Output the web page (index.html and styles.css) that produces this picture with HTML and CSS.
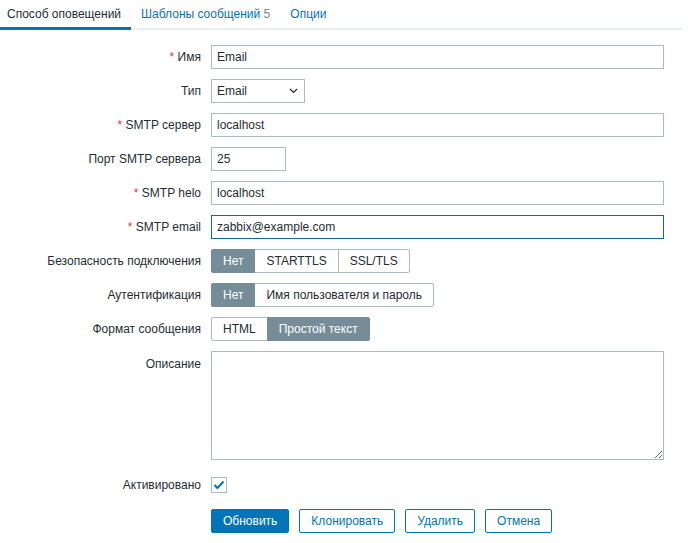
FILE: index.html
```html
<!DOCTYPE html>
<html lang="ru">
<head>
<meta charset="utf-8">
<title>Способ оповещений</title>
<link rel="stylesheet" href="styles.css">
</head>
<body>
<div class="tabs">
  <a class="tab tab-active">Способ оповещений</a>
  <a class="tab">Шаблоны сообщений <span class="count">5</span></a>
  <a class="tab">Опции</a>
</div>
<form class="form">
  <label class="lbl"><span class="req">*</span> Имя</label>
  <div class="field"><input class="input input-wide" type="text" value="Email"></div>

  <label class="lbl">Тип</label>
  <div class="field">
    <div class="select">
      <span>Email</span>
      <svg width="9" height="6" viewBox="0 0 9 6"><path d="M1 1l3.5 3.5L8 1" fill="none" stroke="#1f2c33" stroke-width="1.2"/></svg>
    </div>
  </div>

  <label class="lbl"><span class="req">*</span> SMTP сервер</label>
  <div class="field"><input class="input input-wide" type="text" value="localhost"></div>

  <label class="lbl">Порт SMTP сервера</label>
  <div class="field"><input class="input input-port" type="text" value="25"></div>

  <label class="lbl"><span class="req">*</span> SMTP helo</label>
  <div class="field"><input class="input input-wide" type="text" value="localhost"></div>

  <label class="lbl"><span class="req">*</span> SMTP email</label>
  <div class="field"><input class="input input-wide input-focus" type="text" value="zabbix@example.com"></div>

  <label class="lbl">Безопасность подключения</label>
  <div class="field">
    <div class="seg">
      <span class="seg-btn seg-on">Нет</span><span class="seg-btn">STARTTLS</span><span class="seg-btn">SSL/TLS</span>
    </div>
  </div>

  <label class="lbl">Аутентификация</label>
  <div class="field">
    <div class="seg">
      <span class="seg-btn seg-on">Нет</span><span class="seg-btn">Имя пользователя и пароль</span>
    </div>
  </div>

  <label class="lbl">Формат сообщения</label>
  <div class="field">
    <div class="seg">
      <span class="seg-btn">HTML</span><span class="seg-btn seg-on">Простой текст</span>
    </div>
  </div>

  <label class="lbl lbl-top">Описание</label>
  <div class="field"><textarea class="textarea"></textarea></div>

  <label class="lbl lbl-check">Активировано</label>
  <div class="field field-check">
    <span class="checkbox">
      <svg width="12" height="10" viewBox="0 0 12 10"><path d="M1.5 5l3 3 6-6.5" fill="none" stroke="#0275b8" stroke-width="2"/></svg>
    </span>
  </div>

  <div></div>
  <div class="actions">
    <button type="button" class="btn btn-primary">Обновить</button>
    <button type="button" class="btn">Клонировать</button>
    <button type="button" class="btn">Удалить</button>
    <button type="button" class="btn">Отмена</button>
  </div>
</form>
</body>
</html>
```
FILE: styles.css
```css
* { box-sizing: border-box; }
html, body {
  margin: 0;
  padding: 0;
  background: #fff;
  font-family: "Liberation Sans", Arial, sans-serif;
  font-size: 12px;
  color: #1f2c33;
}
.tabs {
  display: flex;
  height: 30px;
  border-bottom: 2px solid #ebeef0;
  margin-right: 6px;
}
.tab {
  display: block;
  padding: 0 10px;
  line-height: 28px;
  height: 30px;
  color: #0275b8;
  text-decoration: none;
  white-space: nowrap;
}
.tab-active {
  color: #1f2c33;
  padding-left: 7px;
  padding-right: 10px;
  border-bottom: 3px solid #0275b8;
  line-height: 28px;
  margin-bottom: -2px;
}
.count { color: #768d99; }

.form {
  display: grid;
  grid-template-columns: 201px 453px;
  column-gap: 10px;
  row-gap: 10px;
  padding-top: 15px;
}
.lbl {
  text-align: right;
  line-height: 24px;
  height: 24px;
  white-space: nowrap;
}
.lbl-top { align-self: start; margin-top: 1px; }
.req { color: #e33734; }
.field { display: flex; align-items: center; min-height: 24px; }

.input {
  height: 24px;
  border: 1px solid #acbbc2;
  padding: 0 5px;
  font-family: inherit;
  font-size: 12px;
  color: #1f2c33;
  background: #fff;
  outline: none;
  border-radius: 0;
  margin: 0;
}
.input-wide { width: 453px; }
.input-port { width: 75px; }
.input-focus { border-color: #1667a0; }

.select {
  width: 94px;
  height: 24px;
  border: 1px solid #acbbc2;
  padding: 0 6px 0 5px;
  display: flex;
  align-items: center;
  justify-content: space-between;
}

.seg { display: flex; }
.seg-btn {
  height: 24px;
  line-height: 22px;
  padding: 0 11px;
  border: 1px solid #acbbc2;
  margin-left: -1px;
  background: #fff;
  white-space: nowrap;
}
.seg-btn:first-child { margin-left: 0; border-radius: 2px 0 0 2px; }
.seg-btn:last-child { border-radius: 0 2px 2px 0; }
.seg-on {
  background: #768d99;
  border-color: #768d99;
  color: #fff;
  position: relative;
}

.textarea {
  width: 453px;
  height: 109px;
  border: 1px solid #acbbc2;
  resize: both;
  margin: 0;
  display: block;
  font-family: inherit;
  font-size: 12px;
}

.lbl-check { margin-top: 3px; }
.field-check { margin-top: 3px; }
.checkbox {
  width: 16px;
  height: 16px;
  border: 1px solid #acbbc2;
  display: flex;
  align-items: center;
  justify-content: center;
  background: #fff;
}

.actions {
  display: flex;
  gap: 10px;
  margin-top: 2px;
}
.btn {
  height: 24px;
  padding: 0 11px;
  border: 1px solid #0275b8;
  border-radius: 2px;
  background: #fff;
  color: #0275b8;
  font-family: inherit;
  font-size: 12px;
  margin: 0;
  cursor: pointer;
}
.btn-primary {
  background: #0275b8;
  color: #fff;
}
```
